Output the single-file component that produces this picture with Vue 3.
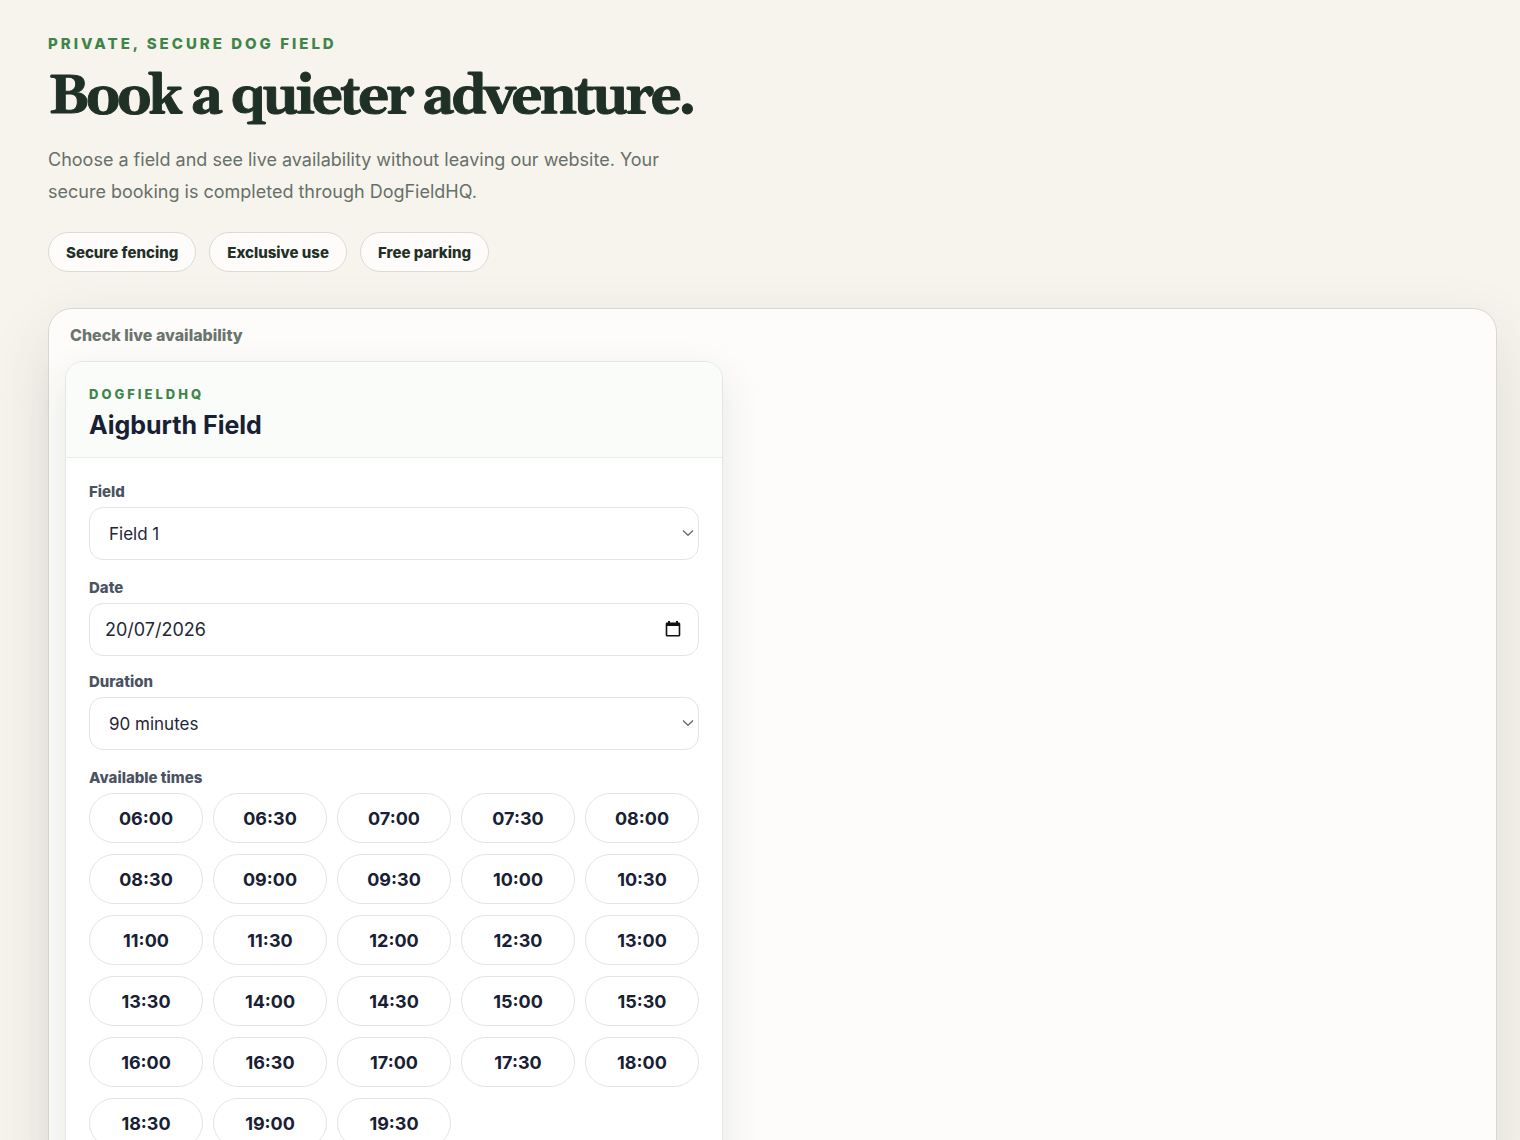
<script setup>
import { ref } from 'vue'

const perks = ['Secure fencing', 'Exclusive use', 'Free parking']
const field = ref('Field 1')
const date = ref('20/07/2026')
const duration = ref('90 minutes')

// Half-hourly start times from 06:00 to 19:30
const times = Array.from({ length: 28 }, (_, i) => {
  const hour = String(6 + Math.floor(i / 2)).padStart(2, '0')
  return `${hour}:${i % 2 ? '30' : '00'}`
})
const selected = ref('')
</script>

<template>
  <main class="page">
    <header class="intro">
      <p class="eyebrow">Private, secure dog field</p>
      <h1>Book a quieter adventure.</h1>
      <p class="lead">
        Choose a field and see live availability without leaving our website. Your secure booking is
        completed through DogFieldHQ.
      </p>
      <ul class="perks">
        <li v-for="perk in perks" :key="perk">{{ perk }}</li>
      </ul>
    </header>

    <section class="panel">
      <h2 class="panel-title">Check live availability</h2>

      <div class="widget">
        <header class="widget-head">
          <p class="brand">DogFieldHQ</p>
          <h3>Aigburth Field</h3>
        </header>

        <form class="widget-body" @submit.prevent>
          <div class="row">
            <label for="field">Field</label>
            <div class="control">
              <select id="field" v-model="field">
                <option>Field 1</option>
              </select>
              <svg class="chevron" viewBox="0 0 12 8" aria-hidden="true">
                <path d="M1 1.5 6 6.2l5-4.7" />
              </svg>
            </div>
          </div>

          <div class="row row-date">
            <label for="date">Date</label>
            <div class="control">
              <input id="date" v-model="date" type="text" inputmode="numeric" />
              <button class="calendar" type="button" aria-label="Open calendar">
                <svg viewBox="0 0 16 16" aria-hidden="true">
                  <path
                    fill-rule="evenodd"
                    d="M3 0h2v1.5h6V0h2v1.5h.8c.9 0 1.5.6 1.5 1.5v11c0 .9-.6 1.5-1.5 1.5H2.2C1.3 15.5.7 14.9.7 14V3c0-.9.6-1.5 1.5-1.5H3zM2.3 5v9h11.4V5z"
                  />
                </svg>
              </button>
            </div>
          </div>

          <div class="row">
            <label for="duration">Duration</label>
            <div class="control">
              <select id="duration" v-model="duration">
                <option>90 minutes</option>
              </select>
              <svg class="chevron" viewBox="0 0 12 8" aria-hidden="true">
                <path d="M1 1.5 6 6.2l5-4.7" />
              </svg>
            </div>
          </div>

          <fieldset class="slots">
            <legend>Available times</legend>
            <div class="slot-grid">
              <button
                v-for="time in times"
                :key="time"
                type="button"
                :aria-pressed="selected === time"
                @click="selected = time"
              >
                {{ time }}
              </button>
            </div>
          </fieldset>
        </form>
      </div>
    </section>
  </main>
</template>

<style>
body {
  background: #f7f4ed;
}
</style>

<style scoped>
.page {
  box-sizing: border-box;
  padding: 32px 23px 64px 48px;
  font-family: Inter, 'Liberation Sans', sans-serif;
  color: #1f3027;
}

h1,
h2,
h3,
p,
ul {
  margin: 0;
}

.eyebrow {
  font-size: 15px;
  line-height: 24px;
  font-weight: 800;
  letter-spacing: 3px;
  text-transform: uppercase;
  color: #3f8549;
}

h1 {
  margin-top: 11px;
  font-family: Georgia, Gelasio, 'Liberation Serif', serif;
  font-size: 54px;
  line-height: 60px;
  font-weight: 700;
  letter-spacing: -3px;
  -webkit-text-stroke: 1px currentColor;
}

.lead {
  max-width: 660px;
  margin-top: 17px;
  font-size: 18px;
  line-height: 32px;
  color: #66706a;
}

.perks {
  display: flex;
  flex-wrap: wrap;
  gap: 13px;
  margin-top: 24px;
  padding: 0;
  list-style: none;
}

.perks li {
  padding: 9px 17px 7px;
  border: 1px solid #dedad2;
  border-radius: 20px;
  background: #fdfcfa;
  font-size: 15px;
  line-height: 22px;
  font-weight: 800;
}

.panel {
  margin-top: 36px;
  padding: 16px;
  border: 1px solid #d9d8d0;
  border-radius: 24px;
  background: #fdfcfa;
  box-shadow: 0 24px 64px rgba(31, 48, 39, 0.12);
}

.panel-title {
  padding: 0 5px 16px;
  font-size: 16px;
  line-height: 20px;
  font-weight: 800;
  color: #6b746e;
}

.widget {
  box-sizing: border-box;
  max-width: 658px;
  border: 1px solid #e3e7e5;
  border-radius: 18px;
  background: #fff;
  box-shadow: 0 16px 40px rgba(31, 48, 39, 0.1);
  overflow: hidden;
}

.widget-head {
  padding: 22px 23px 16px;
  border-bottom: 1px solid #e9eeeb;
  background: #f9fcf9;
}

.brand {
  font-size: 13px;
  line-height: 20px;
  font-weight: 800;
  letter-spacing: 3px;
  text-transform: uppercase;
  color: #3f8549;
}

h3 {
  margin-top: 5px;
  font-size: 25px;
  line-height: 32px;
  font-weight: 700;
  color: #182033;
}

.widget-body {
  padding: 24px 23px;
}

.row {
  margin-bottom: 18px;
}

.row-date {
  margin-bottom: 16px;
}

label,
legend {
  display: block;
  padding: 0;
  margin-bottom: 5px;
  font-size: 15px;
  line-height: 20px;
  font-weight: 800;
  color: #4b5362;
}

.control {
  position: relative;
}

select,
input {
  display: block;
  box-sizing: border-box;
  width: 100%;
  height: 53px;
  padding: 0 19px;
  border: 1px solid #e2e4e6;
  border-radius: 14px;
  background: #fff;
  font-family: inherit;
  font-size: 17px;
  color: #1f2736;
  appearance: none;
}

input {
  padding: 0 15px;
  font-size: 18px;
}

.chevron {
  position: absolute;
  top: 22px;
  right: 5px;
  width: 12px;
  height: 8px;
  fill: none;
  stroke: #6d6d6d;
  stroke-width: 1.4;
  pointer-events: none;
}

.calendar {
  position: absolute;
  top: 18px;
  right: 18px;
  width: 16px;
  height: 16px;
  padding: 0;
  border: 0;
  background: none;
}

.calendar svg {
  display: block;
  fill: #111;
}

.slots {
  margin: 0;
  padding: 0;
  border: 0;
}

.slot-grid {
  display: grid;
  grid-template-columns: repeat(5, 1fr);
  gap: 11px 10px;
}

.slot-grid button {
  height: 50px;
  padding: 0;
  border: 1px solid #e2e4e6;
  border-radius: 25px;
  background: #fff;
  font-family: inherit;
  font-size: 18px;
  font-weight: 700;
  color: #182033;
}
</style>
